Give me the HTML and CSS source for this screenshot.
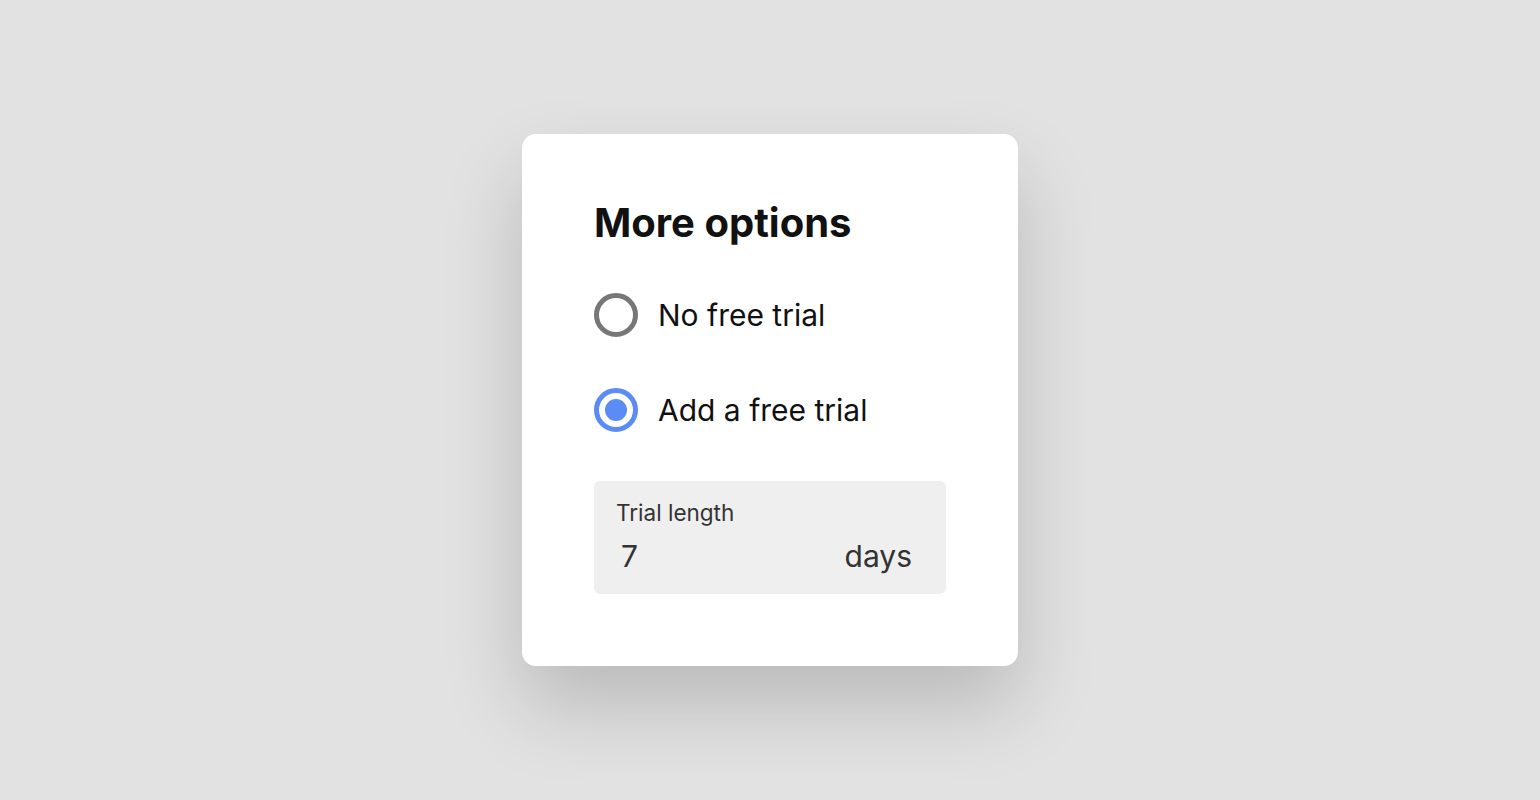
FILE: index.html
```html
<!DOCTYPE html>
<html lang="en">
<head>
  <meta charset="UTF-8">
  <meta name="viewport" content="width=device-width, initial-scale=1.0">
  <title>More options</title>
  <link rel="stylesheet" href="styles.css">
</head>
<body>
  <div class="card">
    <h1 class="title">More options</h1>
    <label class="option">
      <span class="radio"></span>
      <span class="option-text">No free trial</span>
    </label>
    <label class="option">
      <span class="radio checked"></span>
      <span class="option-text">Add a free trial</span>
    </label>
    <div class="field">
      <div class="field-label">Trial length</div>
      <div class="field-row">
        <span class="field-value">7</span>
        <span class="field-unit">days</span>
      </div>
    </div>
  </div>
</body>
</html>
```

FILE: styles.css
```css
body {
  display: flex;
  justify-content: center;
  align-items: center;
  height: 100vh;
  margin: 0;
  background-color: #e2e2e2;
  font-family: Inter, "Noto Sans", sans-serif;
}

.card {
  box-sizing: border-box;
  width: 496px;
  height: 532px;
  padding: 65px 72px;
  background-color: #ffffff;
  border-radius: 14px;
  box-shadow: 0 40px 80px rgba(0, 0, 0, 0.18);
}

.title {
  margin: 0 0 46px;
  font-size: 40px;
  line-height: 48px;
  font-weight: 700;
  color: #111111;
}

.option {
  display: flex;
  align-items: center;
  gap: 20px;
  height: 44px;
  margin-bottom: 51px;
}

.radio {
  box-sizing: border-box;
  width: 44px;
  height: 44px;
  border: 5px solid #777777;
  border-radius: 50%;
  display: flex;
  justify-content: center;
  align-items: center;
}

.radio.checked {
  border-color: #5b8cf6;
}

.radio.checked::after {
  content: "";
  width: 22px;
  height: 22px;
  border-radius: 50%;
  background-color: #5b8cf6;
}

.option-text {
  font-size: 30px;
  color: #111111;
}

.field {
  box-sizing: border-box;
  height: 113px;
  margin-top: -2px;
  padding: 18px 34px 0 22px;
  background-color: #efefef;
  border-radius: 6px;
  color: #333333;
}

.field-label {
  font-size: 22.5px;
  line-height: 28px;
}

.field-row {
  display: flex;
  justify-content: space-between;
  align-items: baseline;
  margin-top: 11px;
  font-size: 30px;
  line-height: 36px;
}

.field-value {
  padding-left: 5px;
}
```
